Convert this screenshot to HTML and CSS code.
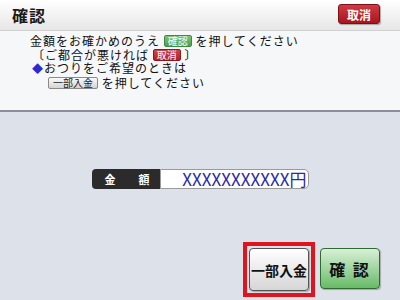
FILE: index.html
```html
<!DOCTYPE html>
<html lang="ja">
  <head>
    <meta charset="UTF-8" />
    <meta name="viewport" content="width=device-width, initial-scale=1.0" />
    <title>確認</title>
    <link rel="stylesheet" href="styles.css">
  </head>
  <body>
    <div class="header">
      <h1 class="title">確認</h1>
      <button class="cancel-btn">取消</button>
    </div>
    <div class="panel">
      <p class="line">金額をお確かめのうえ <span class="tag tag-green">確認</span> を押してください</p>
      <p class="line bracket">〔ご都合が悪ければ <span class="tag tag-red">取消</span> 〕</p>
      <p class="line"><span class="diamond">◆</span>おつりをご希望のときは</p>
      <p class="line indent"><span class="tag tag-gray">一部入金</span> を押してください</p>
    </div>
    <div class="amount-row">
      <div class="amount-label"><span>金</span><span>額</span></div>
      <div class="amount-value">XXXXXXXXXXX円</div>
    </div>
    <div class="btn-row">
      <div class="selected">
        <button class="btn btn-gray">一部入金</button>
      </div>
      <button class="btn btn-green">確&nbsp;認</button>
    </div>
  </body>
</html>
```

FILE: styles.css
```css
* {
  box-sizing: border-box;
}
body {
  margin: 0;
  width: 400px;
  height: 300px;
  overflow: hidden;
  background-color: #dce1ea;
  font-family: "Noto Sans CJK JP", "Liberation Sans", sans-serif;
  color: #111;
}
.header {
  display: flex;
  align-items: center;
  justify-content: space-between;
  height: 31px;
  padding: 0 20px 0 12px;
  background: linear-gradient(#ffffff, #e6e6e6);
  border-bottom: 1px solid #d0d0d0;
}
.title {
  margin: 0;
  font-size: 16px;
  font-weight: bold;
  letter-spacing: 1px;
  color: #1a1a1a;
}
.cancel-btn {
  width: 42px;
  height: 20px;
  margin-top: -2px;
  padding: 0;
  border: 1px solid #7a1016;
  border-radius: 3px;
  background: linear-gradient(#d03a42, #a8161f);
  color: #fff;
  font-family: inherit;
  font-size: 12px;
  font-weight: bold;
  box-shadow: 1px 1px 1px rgba(0, 0, 0, 0.3);
}
.panel {
  height: 81px;
  padding: 3px 0 0 30px;
  background-color: #f6f7f9;
  border-bottom: 2px solid #8b8e96;
  font-size: 12px;
  line-height: 13.5px;
  letter-spacing: 1px;
}
.line {
  margin: 0;
  white-space: nowrap;
}
.bracket {
  padding-left: 2px;
}
.indent {
  padding-left: 18px;
}
.diamond {
  color: #2a2ad0;
  font-size: 11px;
  margin-left: 2px;
}
.tag {
  display: inline-block;
  padding: 0 3px;
  font-size: 10px;
  line-height: 10px;
  letter-spacing: 0;
  border-radius: 2px;
  vertical-align: 1px;
}
.tag-green {
  background: linear-gradient(#7cc47c, #4e9e4e);
  border: 1px solid #3f8a3f;
  color: #fff;
}
.tag-red {
  background: linear-gradient(#d2444c, #b0222a);
  border: 1px solid #90161e;
  color: #fff;
}
.tag-gray {
  padding: 0 4px;
  background: linear-gradient(#fafafa, #d4d4d4);
  border: 1px solid #8a8a8a;
  color: #222;
}
.amount-row {
  display: flex;
  justify-content: center;
  margin-top: 57px;
}
.amount-label {
  display: flex;
  justify-content: space-between;
  width: 68px;
  height: 20px;
  padding: 0 10px 0 13px;
  background-color: #2b2b2b;
  border-radius: 4px 0 0 4px;
  color: #fff;
  font-size: 11px;
  font-weight: bold;
  line-height: 20px;
}
.amount-value {
  width: 149px;
  height: 20px;
  padding-right: 1px;
  background-color: #fff;
  border: 1px solid #9a9a9a;
  border-radius: 0 5px 5px 0;
  color: #2a2aa8;
  font-size: 17px;
  line-height: 17px;
  text-align: right;
}
.btn-row {
  display: flex;
  justify-content: flex-end;
  align-items: flex-start;
  gap: 5px;
  margin-top: 53px;
  padding-right: 20px;
}
.selected {
  padding: 2px;
  border: 4px solid #e0141e;
}
.btn {
  padding: 0;
  border-radius: 4px;
  font-family: inherit;
  font-weight: bold;
  color: #111;
  box-shadow: 1px 1px 1px rgba(0, 0, 0, 0.25);
}
.btn-gray {
  display: block;
  width: 60px;
  height: 43px;
  border: 1px solid #555;
  background: linear-gradient(#ffffff, #d6d6d6);
  font-size: 14px;
}
.btn-green {
  width: 60px;
  height: 41px;
  margin-top: 6px;
  border: 1px solid #2f6a30;
  background: linear-gradient(#d8f0d8, #68bb68);
  font-size: 16px;
  letter-spacing: 2px;
}
```
